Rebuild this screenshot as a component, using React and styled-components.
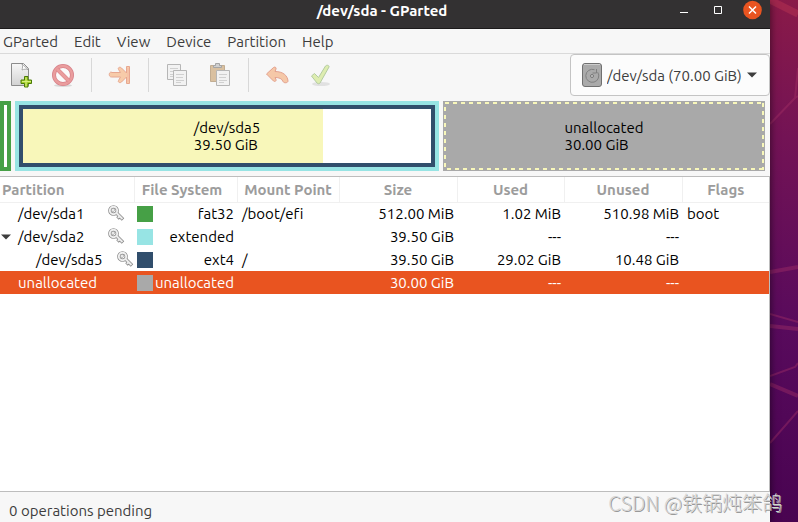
import React from 'react';
import styled, { createGlobalStyle } from 'styled-components';

const GlobalStyle = createGlobalStyle`
  * { box-sizing: border-box; }
  body { margin: 0; }
  body, button, select {
    font-family: Ubuntu, "Open Sans", "Noto Sans", sans-serif;
    font-size: 15px;
    font-variant-ligatures: none;
    color: #3d3d3d;
  }
`;

const Desktop = styled.div`
  position: relative;
  display: flex;
  min-height: 100vh;
  padding-right: 28px;
  overflow: hidden;
  background: linear-gradient(188deg, #8a1a48 0, #731355 22%, #580a5c 52%, #4a0452 80%, #480346 100%);
`;

const Wallpaper = styled.svg`
  position: absolute;
  top: 0;
  right: 0;
  width: 28px;
  height: 522px;
`;

const Window = styled.main`
  position: relative;
  flex: 1;
  min-width: 0;
  display: flex;
  flex-direction: column;
  background: #f7f7f7;
  box-shadow: 0 2px 8px rgba(0, 0, 0, 0.6);
`;

const TitleBar = styled.header`
  display: grid;
  grid-template-columns: 1fr auto 1fr;
  height: 29px;
  padding: 0 8px 7px 2px;
  background: #333132;
  border-bottom: 1px solid #1c1a1b;
`;

const Title = styled.h1`
  grid-column: 2;
  margin: 0;
  font-size: 15px;
  line-height: 22px;
  font-weight: 700;
  color: #fff;
`;

const Controls = styled.div`
  display: flex;
  justify-content: flex-end;
  gap: 15px;
`;

const ControlButton = styled.button`
  display: flex;
  width: 19px;
  height: 20px;
  padding: 0;
  border: 0;
  background: none;
`;

const MenuBar = styled.nav`
  display: flex;
  gap: 16px;
  height: 25px;
  padding: 2px 3px 0;
  border-bottom: 1px solid #dadada;
`;

const MenuItem = styled.button`
  padding: 0;
  border: 0;
  background: none;
  line-height: 22px;
`;

const ToolBar = styled.div`
  display: flex;
  align-items: center;
  height: 42px;
`;

const ToolButton = styled.button`
  display: flex;
  padding: 0 11px 0 8px;
  border: 0;
  background: none;
  opacity: ${(p) => (p.disabled ? 0.5 : 1)};
`;

const Separator = styled.div`
  width: 1px;
  height: 34px;
  margin: 0 8px 0 5px;
  background: #d8d8d8;
`;

const DevicePicker = styled.label`
  display: flex;
  align-items: center;
  gap: 5px;
  height: 42px;
  margin-left: auto;
  padding: 0 12px 0 11px;
  border: 1px solid #c4c4c4;
  border-radius: 4px;
  background: #fcfcfc;
`;

const DeviceSelect = styled.select`
  appearance: none;
  padding: 0;
  border: 0;
  background: none;
`;

const DiskMap = styled.section`
  display: flex;
  gap: 4px;
  height: 80px;
  padding: 5px 5px 5px 0;
`;

const Segment = styled.div`
  display: flex;
  flex: ${(p) => p.$flex};
  height: ${(p) => (p.$inner ? 'auto' : '70px')};
  border: 4px solid ${(p) => p.$color};
  background: #fff;
`;

const Volume = styled(Segment)`
  align-items: center;
  justify-content: center;
  background: linear-gradient(to right, #f8f7ba ${(p) => p.$used}%, #fff ${(p) => p.$used}%) padding-box;
`;

const dash = (dir) => `repeating-linear-gradient(${dir}, #f8f7ba 0 4px, transparent 4px 8px)`;

const FreeSpace = styled.div`
  display: flex;
  flex: 320;
  height: 70px;
  padding: 1px;
  background: #a9a9a9;
`;

const Dashes = styled.div`
  display: flex;
  flex: 1;
  align-items: center;
  justify-content: center;
  background:
    ${dash('to right')} 1px 0 / 100% 2px no-repeat,
    ${dash('to right')} 3px 100% / 100% 2px no-repeat,
    ${dash('to bottom')} 0 5px / 2px 100% no-repeat,
    ${dash('to bottom')} 100% 1px / 2px 100% no-repeat;
`;

const MapLabel = styled.p`
  margin: 0;
  line-height: 17px;
  color: #000;
`;

const TablePane = styled.section`
  flex: 1;
  border: solid #bdbdbd;
  border-width: 1px 1px 1px 0;
  background: #fff;
`;

const Table = styled.table`
  width: 100%;
  table-layout: fixed;
  border-collapse: collapse;
`;

const Col = styled.col`
  width: ${(p) => p.$width};
`;

const HeadCell = styled.th`
  height: 25px;
  padding: ${(p) => p.$pad || '0'};
  border: solid #f0f0f0;
  border-width: 0 1px 1px 0;
  text-align: ${(p) => (p.$left ? 'left' : 'center')};
  white-space: nowrap;
  color: #9c9c9c;
  &:last-child { border-right: 0; }
`;

const Row = styled.tr`
  height: 23px;
  color: ${(p) => (p.$selected ? '#fff' : '#000')};
  background: ${(p) => (p.$selected ? '#e95420' : 'transparent')};
`;

const Cell = styled.td`
  padding: 0 3px 0 ${(p) => (p.$left ? '5px' : '3px')};
  line-height: 22px;
  text-align: ${(p) => (p.$left ? 'left' : 'right')};
  white-space: nowrap;
`;

const NameLine = styled.div`
  display: flex;
  align-items: center;
  margin: 0 -3px 0 -5px;
  padding-left: ${(p) => (p.$nested ? '18px' : '0')};
`;

const Expander = styled.span`
  display: flex;
  width: 18px;
  padding-left: 1px;
`;

const Name = styled.span`
  width: ${(p) => (p.$nested ? '81px' : '90px')};
`;

const TypeLine = styled.div`
  display: flex;
  align-items: center;
  justify-content: space-between;
`;

const Swatch = styled.span`
  width: 16px;
  height: 16px;
  background: ${(p) => p.$color};
`;

const StatusBar = styled.footer`
  height: 30px;
  padding: 0 9px;
  line-height: 37px;
`;

const Watermark = styled.div`
  position: absolute;
  right: 16px;
  bottom: 5px;
  font-family: "Noto Sans CJK SC", sans-serif;
  font-size: 20px;
  font-weight: 300;
  line-height: 28px;
  color: #d4d4d4;
  text-shadow: 1px 1px 0 #999;
`;

const NewIcon = () => (
  <svg width="24" height="26" viewBox="0 0 24 26">
    <defs>
      <linearGradient id="page" x2="0" y2="1"><stop stopColor="#f8f8f8" /><stop offset="1" stopColor="#d2d2d2" /></linearGradient>
    </defs>
    <path d="M3.500 1.500h12l5 5v17h-17z" fill="url(#page)" stroke="#8c8c8c" />
    <path d="M14 2c1 2 .5 4 0 6 2-1 4-1 6-.5z" fill="#fff" stroke="#999" strokeWidth=".8" />
    <path d="M16.500 14.500h3.500v3.500h3.500v3.500h-3.500v3.500h-3.500v-3.500h-3.500v-3.500h3.500z" fill="#a5d02b" stroke="#4a7a08" />
    <path d="M18 15.500v9M14 19.500h9" stroke="#d5ef7c" />
  </svg>
);

const DeleteIcon = () => (
  <svg width="24" height="26" viewBox="0 0 24 26">
    <ellipse cx="12" cy="23.500" rx="9" ry="1.500" fill="#bbb" />
    <circle cx="12" cy="13" r="9" fill="#fff" stroke="#b80f20" strokeWidth="4" />
    <circle cx="12" cy="13" r="9" fill="none" stroke="#df4646" strokeWidth="2.500" />
    <path d="M6 7l12 12" stroke="#c9202c" strokeWidth="4" />
    <path d="M6 7l12 12" stroke="#df4646" strokeWidth="2.500" />
  </svg>
);

const ResizeIcon = () => (
  <svg width="24" height="24" viewBox="0 0 24 24">
    <path d="M3.500 9.500h9l-2-3c-1-2 1.500-3 3-1.500l5 5v-6.500h3v17h-3v-6.500l-5 5c-1.500 1.500-4 0-3-1.500l2-3.500h-9c-3 0-3-5 0-5z" fill="#f8a05e" stroke="#d85a2c" strokeLinejoin="round" />
    <path d="M20 5v14" stroke="#f47c50" />
  </svg>
);

const PageLines = ({ x, y }) => (
  <g transform={`translate(${x} ${y})`}>
    <path d="M.500.500h13v15h-13z" fill="#efefef" stroke="#777" />
    <path d="M3 4.500h8M3 7.500h7M3 10.500h8M3 12.500h5" stroke="#aaa" />
  </g>
);

const CopyIcon = () => (
  <svg width="24" height="26" viewBox="0 0 24 26">
    <PageLines x={2} y={2} />
    <PageLines x={8} y={8} />
  </svg>
);

const PasteIcon = () => (
  <svg width="24" height="26" viewBox="0 0 24 26">
    <path d="M2.500 3.500h14v16h-14z" fill="#bd8a4b" stroke="#8f6630" />
    <path d="M5.500 5.500v-2h2v-2h4v2h2v2z" fill="#aaa" stroke="#555" />
    <PageLines x={8} y={8} />
  </svg>
);

const UndoIcon = () => (
  <svg width="24" height="24" viewBox="0 0 24 24">
    <path d="M1.500 11l7-6.500c1.500-1 3 0 2.500 1.500l-1 2.500c8 0 12.500 4 13 9.500 0 2-4 2.500-5 .500-1-3-4-4-8-4l1 2c.500 1.500-1 2.500-2.500 1.500z" fill="#f59a5c" stroke="#d04c28" strokeLinejoin="round" />
  </svg>
);

const ApplyIcon = () => (
  <svg width="24" height="26" viewBox="0 0 24 26">
    <ellipse cx="13" cy="22" rx="9" ry="2" fill="#ccc" />
    <path d="M3.500 14l3-2.500 4 4 7-11.500c1.500-1.500 4-.500 3.500 1l-9 16c-.500 1-2 1-3 0z" fill="#c6e46c" stroke="#72a24c" strokeLinejoin="round" />
  </svg>
);

const DiskIcon = () => (
  <svg width="20" height="24" viewBox="0 0 20 24">
    <rect x=".5" y=".5" width="19" height="23" rx="2.500" fill="#aaa" stroke="#707070" />
    <path d="M2 1.500h16" stroke="#ccc" />
    <path d="M15.700 9.200A6.500 6.500 0 1 1 12.500 6.700M14.500 6v4h-4" fill="none" stroke="#808080" />
    <circle cx="10" cy="13" r="1.500" fill="#ccc" stroke="#666" strokeWidth=".8" />
  </svg>
);

const Triangle = () => (
  <svg width="10" height="6" viewBox="0 0 10 6"><path d="M0 .500h10L5 5.500z" fill="#3d3d3d" /></svg>
);

const KeyIcon = () => (
  <svg width="17" height="17" viewBox="0 0 17 17">
    <circle cx="5.500" cy="5.500" r="3.700" fill="none" stroke="#858585" strokeWidth="3.200" />
    <path d="M8.500 8l6.500 6.500M11.500 11.500l-2 2" stroke="#858585" strokeWidth="3.500" />
    <circle cx="5.500" cy="5.500" r="3.700" fill="none" stroke="#f0f0f0" strokeWidth="1.900" />
    <path d="M8 7.500l6.500 6.500M11.500 11l-1.500 2" stroke="#ececec" strokeWidth="2" />
    <circle cx="5" cy="5" r="1.500" fill="#fff" stroke="#999" strokeWidth=".7" />
  </svg>
);

const tools = [
  { label: 'New', Icon: NewIcon, enabled: true },
  { label: 'Delete', Icon: DeleteIcon },
  null,
  { label: 'Resize/Move', Icon: ResizeIcon },
  null,
  { label: 'Copy', Icon: CopyIcon },
  { label: 'Paste', Icon: PasteIcon },
  null,
  { label: 'Undo', Icon: UndoIcon },
  { label: 'Apply', Icon: ApplyIcon },
];

const columns = [
  { title: 'Partition', width: '134px', left: true, pad: '0 7px 0 2px' },
  { title: 'File System', width: '103px', pad: '0 7px 0 0' },
  { title: 'Mount Point', width: '102px' },
  { title: 'Size', width: '118px' },
  { title: 'Used', width: '107px' },
  { title: 'Unused', width: '118px' },
  { title: 'Flags', width: 'auto' },
];

const partitions = [
  { name: '/dev/sda1', locked: true, color: '#46a046', type: 'fat32', mount: '/boot/efi', size: '512.00 MiB', used: '1.02 MiB', unused: '510.98 MiB', flags: 'boot' },
  { name: '/dev/sda2', locked: true, open: true, color: '#97e4e4', type: 'extended', size: '39.50 GiB', used: '---', unused: '---' },
  { name: '/dev/sda5', locked: true, nested: true, color: '#314e6c', type: 'ext4', mount: '/', size: '39.50 GiB', used: '29.02 GiB', unused: '10.48 GiB' },
  { name: 'unallocated', selected: true, color: '#a9a9a9', type: 'unallocated', size: '30.00 GiB', used: '---', unused: '---' },
];

export default function App() {
  return (
    <Desktop>
      <GlobalStyle />
      <Wallpaper viewBox="0 0 28 522" preserveAspectRatio="none" fill="none" stroke="#a83267" strokeOpacity=".4">
        <path d="M0 0l28 14" strokeWidth="7" stroke="#c43a54" />
        <path d="M28 68l-3 30L0 124M28 96l-3 2" strokeWidth="2" />
        <path d="M0 272l28-5M0 326l28 3M0 384l28 12" strokeWidth="4" />
        <path d="M0 314l28 8M0 376l25-9 3-4M0 443l28-32" strokeWidth="2" />
      </Wallpaper>
      <Window>
        <TitleBar>
          <Title>/dev/sda - GParted</Title>
          <Controls>
            <ControlButton aria-label="Minimize">
              <svg width="19" height="20"><path d="M5 12.500h8" stroke="#fff" /></svg>
            </ControlButton>
            <ControlButton aria-label="Maximize">
              <svg width="19" height="20"><path d="M5.500 6.500h7v7h-7z" fill="none" stroke="#fff" /></svg>
            </ControlButton>
            <ControlButton aria-label="Close">
              <svg width="19" height="20"><circle cx="9.500" cy="10" r="9.300" fill="#e95420" /><path d="M6 6.500l7 7M13 6.500l-7 7" stroke="#fff" strokeWidth="1.500" /></svg>
            </ControlButton>
          </Controls>
        </TitleBar>
        <MenuBar>
          {['GParted', 'Edit', 'View', 'Device', 'Partition', 'Help'].map((m) => <MenuItem key={m}>{m}</MenuItem>)}
        </MenuBar>
        <ToolBar>
          {tools.map((t, i) => t
            ? <ToolButton key={i} aria-label={t.label} disabled={!t.enabled}><t.Icon /></ToolButton>
            : <Separator key={i} />)}
          <DevicePicker>
            <DiskIcon />
            <DeviceSelect aria-label="Device"><option>/dev/sda (70.00 GiB)</option></DeviceSelect>
            <Triangle />
          </DevicePicker>
        </ToolBar>
        <DiskMap>
          <Segment $color="#46a046" $flex="0 0 11px" />
          <Segment $color="#97e4e4" $flex="416">
            <Volume $color="#314e6c" $flex="1" $inner $used={73.5}>
              <MapLabel>/dev/sda5<br />39.50 GiB</MapLabel>
            </Volume>
          </Segment>
          <FreeSpace><Dashes><MapLabel>unallocated<br />30.00 GiB</MapLabel></Dashes></FreeSpace>
        </DiskMap>
        <TablePane>
          <Table>
            <colgroup>{columns.map((c) => <Col key={c.title} $width={c.width} />)}</colgroup>
            <thead>
              <tr>{columns.map((c) => <HeadCell key={c.title} $left={c.left} $pad={c.pad}>{c.title}</HeadCell>)}</tr>
            </thead>
            <tbody>
              {partitions.map((p) => (
                <Row key={p.name} $selected={p.selected}>
                  <Cell $left>
                    <NameLine $nested={p.nested}>
                      <Expander>{p.open && <Triangle />}</Expander>
                      <Name $nested={p.nested}>{p.name}</Name>
                      {p.locked && <KeyIcon />}
                    </NameLine>
                  </Cell>
                  <Cell><TypeLine><Swatch $color={p.color} />{p.type}</TypeLine></Cell>
                  <Cell $left>{p.mount}</Cell>
                  <Cell>{p.size}</Cell>
                  <Cell>{p.used}</Cell>
                  <Cell>{p.unused}</Cell>
                  <Cell $left>{p.flags}</Cell>
                </Row>
              ))}
            </tbody>
          </Table>
        </TablePane>
        <StatusBar>0 operations pending</StatusBar>
      </Window>
      <Watermark>CSDN @铁锅炖笨鸽</Watermark>
    </Desktop>
  );
}
